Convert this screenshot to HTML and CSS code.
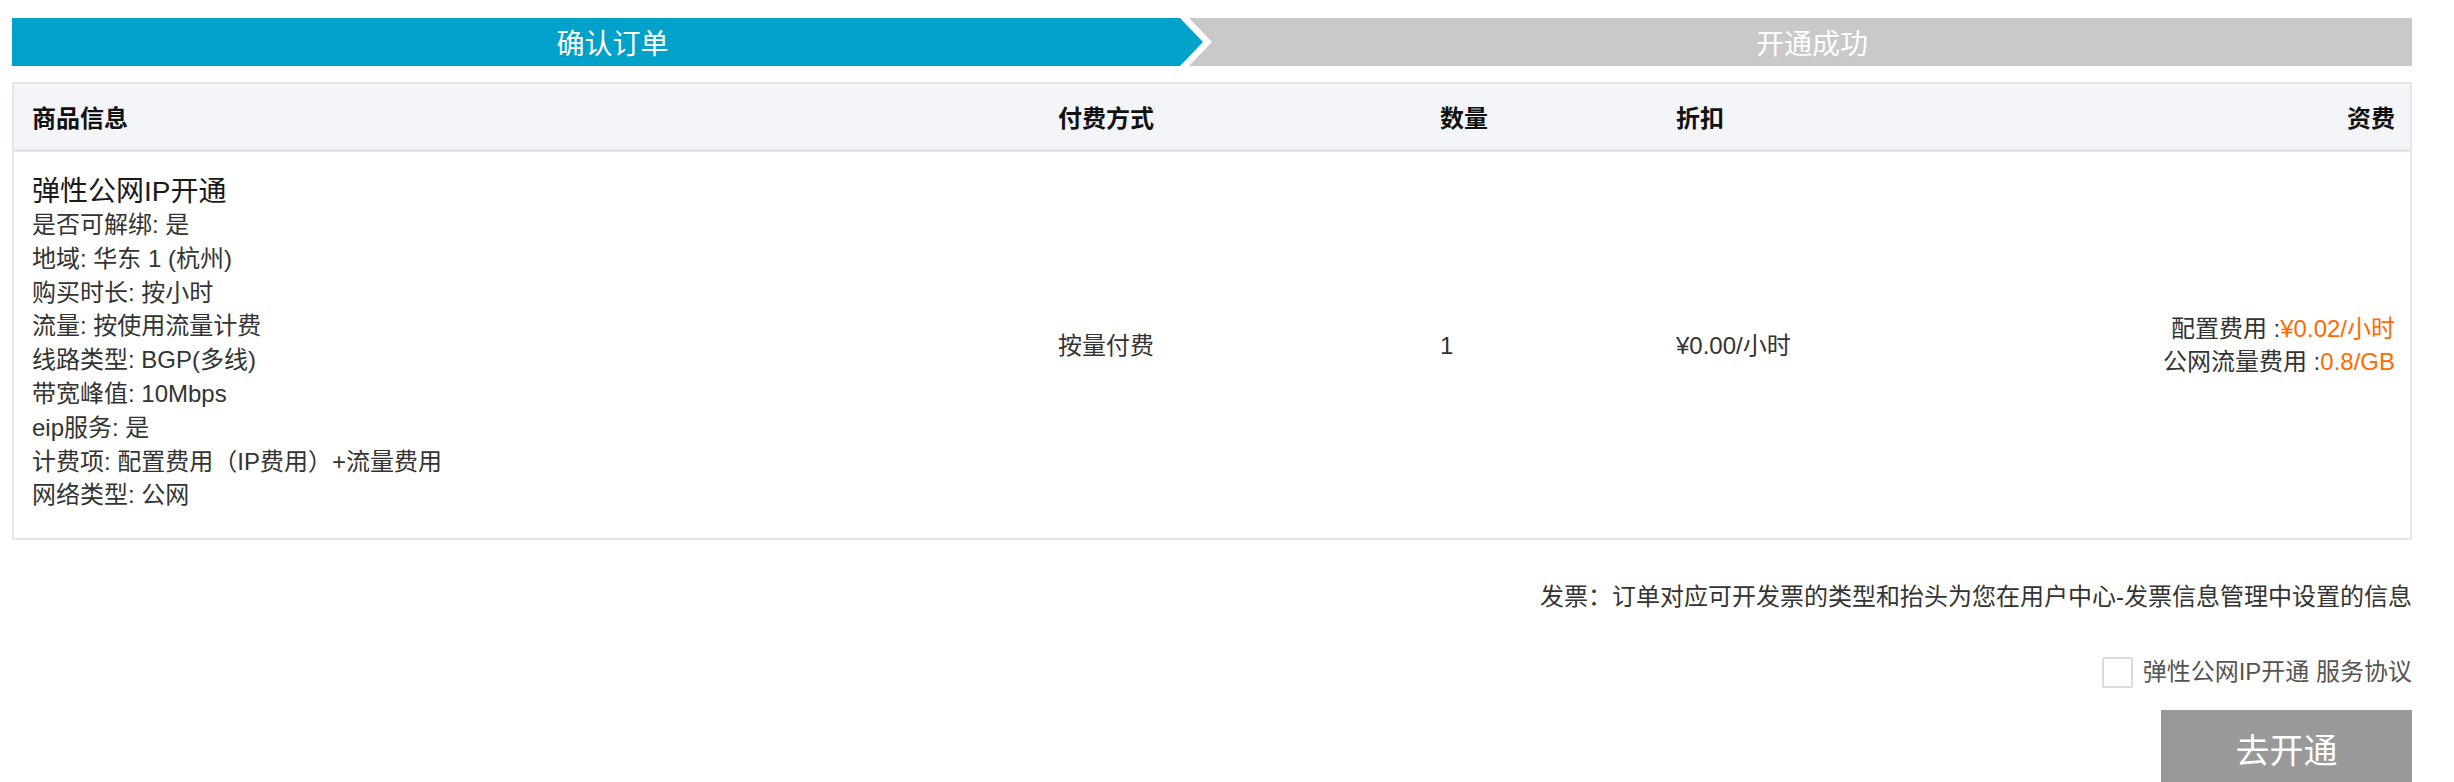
FILE: index.html
```html
<!DOCTYPE html>
<html lang="zh-CN">
<head>
<meta charset="utf-8">
<title>确认订单</title>
<link rel="stylesheet" href="styles.css">
</head>
<body>
<div class="page">
  <div class="steps">
    <div class="step step-active"><div class="step-inner">确认订单</div></div>
    <div class="step step-next">开通成功</div>
  </div>

  <div class="order">
    <div class="order-head">
      <div class="cell">商品信息</div>
      <div class="cell">付费方式</div>
      <div class="cell">数量</div>
      <div class="cell">折扣</div>
      <div class="cell cell-right">资费</div>
    </div>
    <div class="order-row">
      <div class="cell cell-product">
        <div class="product-title">弹性公网IP开通</div>
        <ul class="product-specs">
          <li>是否可解绑: 是</li>
          <li>地域: 华东 1 (杭州)</li>
          <li>购买时长: 按小时</li>
          <li>流量: 按使用流量计费</li>
          <li>线路类型: BGP(多线)</li>
          <li>带宽峰值: 10Mbps</li>
          <li>eip服务: 是</li>
          <li>计费项: 配置费用（IP费用）+流量费用</li>
          <li>网络类型: 公网</li>
        </ul>
      </div>
      <div class="cell cell-mid">按量付费</div>
      <div class="cell cell-mid">1</div>
      <div class="cell cell-mid">¥0.00/小时</div>
      <div class="cell cell-mid cell-right">
        <div class="fee">配置费用 :<span class="price">¥0.02/小时</span></div>
        <div class="fee">公网流量费用 :<span class="price">0.8/GB</span></div>
      </div>
    </div>
  </div>

  <p class="invoice">发票：订单对应可开发票的类型和抬头为您在用户中心-发票信息管理中设置的信息</p>

  <div class="agree-row">
    <label class="agree"><span class="checkbox"></span><span class="agree-text">弹性公网IP开通 服务协议</span></label>
  </div>

  <div class="actions">
    <button class="btn-open" type="button">去开通</button>
  </div>
</div>
</body>
</html>
```

FILE: styles.css
```css
html, body {
  margin: 0;
  padding: 0;
  background: #fff;
}

body {
  font-family: "Liberation Sans", "Noto Sans CJK SC", sans-serif;
  color: #333;
  font-size: 24px;
}

.page {
  width: 2400px;
  margin-left: 12px;
  padding-top: 18px;
}

/* steps */
.steps {
  display: flex;
  height: 48px;
  background: #c9c9c9;
}

.step {
  height: 48px;
  font-size: 28px;
  color: #fff;
}

.step-active {
  width: 1200px;
  box-sizing: border-box;
  padding-right: 9px;
  background: #fff;
  clip-path: polygon(0 0, calc(100% - 23px) 0, 100% 50%, calc(100% - 23px) 100%, 0 100%);
}

.step-inner {
  height: 100%;
  box-sizing: border-box;
  padding-left: 10px;
  background: #00a2ca;
  clip-path: polygon(0 0, calc(100% - 23px) 0, 100% 50%, calc(100% - 23px) 100%, 0 100%);
  display: flex;
  align-items: center;
  justify-content: center;
}

.step-next {
  flex: 1;
  display: flex;
  align-items: center;
  justify-content: center;
}

/* order table */
.order {
  margin-top: 16px;
  border: 2px solid #e4e6ea;
}

.order-head,
.order-row {
  display: grid;
  grid-template-columns: 1026px 382px 236px 1fr 1fr;
}

.order-head {
  height: 65px;
  background: #f4f5f9;
  border-bottom: 3px solid #e4e6ea;
  align-items: center;
  font-weight: bold;
  color: #111;
}

.cell {
  padding: 0 15px 0 18px;
}

.cell-right {
  text-align: right;
}

.order-row {
  background: #fff;
}

.cell-product {
  padding-top: 24px;
  padding-bottom: 26px;
}

.product-title {
  font-size: 28px;
  line-height: 32px;
  color: #1a1a1a;
}

.product-specs {
  list-style: none;
  margin: 0;
  padding: 0;
  line-height: 33.8px;
}

.cell-mid {
  display: flex;
  flex-direction: column;
  justify-content: center;
  line-height: 33px;
}

.cell-mid.cell-right {
  align-items: flex-end;
}

.price {
  color: #ff6a00;
}

/* footer */
.invoice {
  margin: 40px 0 0;
  text-align: right;
  line-height: 34px;
}

.agree-row {
  margin-top: 41px;
  display: flex;
  justify-content: flex-end;
}

.agree {
  display: flex;
  align-items: center;
  gap: 10px;
  line-height: 34px;
  color: #555;
}

.checkbox {
  width: 27px;
  height: 27px;
  border: 2px solid #dcdcdc;
  border-radius: 2px;
  background: #fff;
}

.actions {
  margin-top: 21px;
  display: flex;
  justify-content: flex-end;
}

.btn-open {
  width: 251px;
  height: 76px;
  border: 0;
  background: #999;
  color: #fff;
  font-family: "Liberation Sans", "Noto Sans CJK SC", sans-serif;
  font-size: 34px;
  padding: 0;
}
```
